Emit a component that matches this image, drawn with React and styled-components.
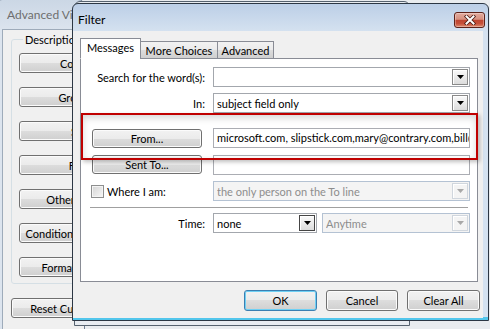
import React from 'react';
import styled, { createGlobalStyle } from 'styled-components';

const GlobalStyle = createGlobalStyle`
    html, body {
        margin: 0;
        padding: 0;
    }
    body {
        width: 490px;
        height: 329px;
        overflow: hidden;
        background: #e9ecef;
        font-family: Lato, "Noto Sans", "DejaVu Sans", sans-serif;
        font-size: 11px;
        color: #000;
    }
`;

const Desktop = styled.div`
    position: relative;
    width: 490px;
    height: 329px;
    overflow: hidden;
`;

//#region Window chrome

const Window = styled.div`
    position: absolute;
    box-sizing: border-box;
    display: flex;
    flex-direction: column;
    border: 1px solid #56626f;
    border-radius: 7px 7px 0 0;
`;

// only the strip left of the Filter dialog is ever visible
const BackWindow = styled(Window)`
    left: -5px;
    top: -1px;
    width: 90px;
    height: 345px;
    overflow: hidden;
    border-color: #6d7d90;
    background: linear-gradient(#cbd7e5, #dce4ee 30px, #dce4ee);
`;

const GhostWindow = styled(Window)`
    left: 74px;
    top: 1px;
    width: 336px;
    height: 325px;
    border-radius: 6px 6px 0 0;
    background: #e8ecf1;
    z-index: 1;
`;

const FilterWindow = styled(Window)`
    left: 72px;
    top: 3px;
    width: 417px;
    height: 318px;
    border-color: #2c3744;
    border-radius: 6px 6px 0 0;
    background: linear-gradient(#bccfe7, #d5e2f0 28px, #d4e2f1 calc(100% - 3px), #52c6ec calc(100% - 3px));
    z-index: 2;
`;

const TitleBar = styled.div`
    display: flex;
    align-items: flex-start;
    justify-content: space-between;
    height: ${props => props.$height}px;
    box-sizing: border-box;
    padding: ${props => props.$top}px 3px 0 ${props => props.$left}px;
`;

const TitleText = styled.span`
    line-height: 15px;
    font-size: 12px;
    color: ${props => props.$inactive ? '#6e6e6e' : '#000'};
    white-space: nowrap;
`;

const CloseButton = styled.div`
    box-sizing: border-box;
    width: 31px;
    height: 16px;
    display: flex;
    align-items: center;
    justify-content: center;
    border: 1px solid #5e2219;
    border-radius: 3px;
    background: linear-gradient(#e3ab9e 0%, #d6907f 45%, #bf4530 52%, #c65039 75%, #dc8a6e 100%);
    box-shadow: inset 0 0 0 1px rgba(255, 255, 255, 0.3);
`;

//#endregion

//#region Back window contents

const BackClient = styled.div`
    flex: 1;
    display: flex;
    flex-direction: column;
    align-items: flex-start;
    margin: 0 0 0 6px;
    padding-left: 8px;
    border: 1px solid #9eabba;
    border-width: 1px 0 0 1px;
    background: #f0f0f0;
`;

const GroupBox = styled.div`
    display: flex;
    flex-direction: column;
    align-items: flex-start;
    gap: 14px;
    width: 160px;
    margin-top: 9px;
    padding: 0 0 6px 7px;
    border: 1px solid #d5dfe5;
    border-radius: 3px;
`;

const GroupLegend = styled.span`
    line-height: 15px;
    margin: -8px 0 -8px 4px;
    padding: 0 2px;
    background: #f0f0f0;
`;

//#endregion

//#region Controls

const Button = styled.button`
    box-sizing: border-box;
    width: ${props => props.$width}px;
    height: ${props => props.$height || 20}px;
    flex: 0 0 auto;
    margin: 0;
    padding: 0 2px;
    font: inherit;
    line-height: 15px;
    color: #000;
    white-space: nowrap;
    overflow: hidden;
    border: 1px solid ${props => props.$default ? '#3c7fb1' : '#707070'};
    border-radius: 3px;
    background: linear-gradient(#f2f2f2 0%, #ebebeb 50%, #dddddd 50%, #cfcfcf 100%);
    box-shadow: inset 0 0 0 1px ${props => props.$default ? '#6fd0f4' : '#fbfbfb'};
`;

const Panel = styled.div`
    position: relative;
    box-sizing: border-box;
    height: 224px;
    display: flex;
    flex-direction: column;
    padding: 8px 7px 0 10px;
    border: 1px solid #898c95;
    background: #fff;
`;

const TabRow = styled.div`
    position: relative;
    z-index: 1;
    display: flex;
    align-items: flex-end;
    height: 21px;
    margin-bottom: -1px;
`;

const Tab = styled.div`
    box-sizing: border-box;
    width: ${props => props.$width}px;
    height: ${props => props.$active ? 21 : 18}px;
    margin-left: ${props => props.$first ? 0 : -1}px;
    display: flex;
    align-items: center;
    justify-content: center;
    padding-bottom: ${props => props.$active ? 2 : 0}px;
    border: 1px solid #898c95;
    border-bottom-color: ${props => props.$active ? '#fff' : '#898c95'};
    background: ${props => props.$active ? '#fff' : 'linear-gradient(#f2f2f2, #ebebeb 50%, #dddddd 50%, #cfcfcf)'};
    white-space: nowrap;
`;

const Row = styled.div`
    display: flex;
    align-items: center;
    height: 20px;
    margin-top: ${props => props.$gap || 0}px;
`;

const LabelCell = styled.div`
    flex: 0 0 114px;
    display: flex;
    align-items: center;
    align-self: ${props => props.$top ? 'flex-start' : 'auto'};
    justify-content: ${props => props.$left ? 'flex-start' : 'flex-end'};
    margin-right: 8px;
    white-space: nowrap;
`;

const Controls = styled.div`
    flex: 1;
    display: flex;
    gap: 5px;
    min-width: 0;
`;

const Combo = styled.div`
    box-sizing: border-box;
    flex: ${props => props.$width ? `0 0 ${props.$width}px` : '1'};
    min-width: 0;
    height: 20px;
    display: flex;
    align-items: center;
    padding: 0 1px 0 3px;
    border: 1px solid ${props => props.$disabled ? '#b4c2d3' : '#a3a7ad'};
    background: ${props => props.$disabled ? '#f4f4f4' : '#fff'};
    color: ${props => props.$disabled ? '#8d8d8d' : '#000'};
`;

const ComboText = styled.span`
    flex: 1;
    overflow: hidden;
    white-space: nowrap;
`;

const DropButton = styled.span`
    box-sizing: border-box;
    width: 16px;
    height: 16px;
    display: flex;
    align-items: center;
    justify-content: center;
    border: 1px solid ${props => props.$disabled ? '#d0d6dd' : props.$dark ? '#454545' : '#8a8a8a'};
    background: ${props => props.$disabled ? '#f4f4f4' : 'linear-gradient(#fafafa, #dcdcdc)'};
    box-shadow: inset 1px 1px 0 #fff;
`;

const TextField = styled.div`
    box-sizing: border-box;
    flex: 1;
    min-width: 0;
    height: 20px;
    padding: 0 1px 0 3px;
    line-height: 18px;
    border: 1px solid #abadb3;
    background: #fff;
    overflow: hidden;
    white-space: nowrap;
`;

const CheckBox = styled.span`
    box-sizing: border-box;
    width: 13px;
    height: 13px;
    margin-right: 3px;
    border: 1px solid #8e8f8f;
    background: linear-gradient(135deg, #d4d4d4, #f7f7f7);
    box-shadow: inset 0 0 0 1px #f4f4f4;
`;

const Separator = styled.div`
    height: 1px;
    margin: 6px 2px 5px -1px;
    background: #a0a0a0;
`;

const Highlight = styled.div`
    position: absolute;
    left: 0;
    top: 54px;
    width: 397px;
    height: 47px;
    box-sizing: border-box;
    border: 2px solid #c00000;
    box-shadow: 2px 2px 4px rgba(0, 0, 0, 0.25), inset 0 3px 7px rgba(0, 0, 0, 0.16);
    pointer-events: none;
`;

const FilterClient = styled.div`
    flex: 1;
    display: flex;
    flex-direction: column;
    margin: 0 5px 2px 0;
    padding: 7px 5px 0 7px;
    background: #f0f0f0;
`;

const ButtonRow = styled.div`
    display: flex;
    justify-content: flex-end;
    gap: 9px;
    margin: 8px -2px 0 0;
`;

//#endregion

const Arrow = ({ disabled }) => (
    <svg width="7" height="4" viewBox="0 0 7 4">
        <path d="M0 0h7L3.5 4z" fill={disabled ? '#a8a8a8' : '#000'} />
    </svg>
);

const DropDown = ({ text, width, disabled, dark }) => (
    <Combo $width={width} $disabled={disabled}>
        <ComboText>{text}</ComboText>
        <DropButton $disabled={disabled} $dark={dark}>
            <Arrow disabled={disabled} />
        </DropButton>
    </Combo>
);

const backButtons = [
    'Columns...',
    'Group By...',
    'Sort...',
    'Filter...',
    'Other Settings...',
    'Conditional Formatting...',
    'Format Columns...',
];

const App = () => {
    return (
        <Desktop>
            <GlobalStyle />

            <BackWindow>
                <TitleBar $height={29} $top={7} $left={11}>
                    <TitleText $inactive>Advanced View Settings: Messages</TitleText>
                </TitleBar>
                <BackClient>
                    <GroupBox>
                        <GroupLegend>Description</GroupLegend>
                        {backButtons.map(label => (
                            <Button key={label} $width={132}>{label}</Button>
                        ))}
                    </GroupBox>
                    <Button $width={132} style={{ marginTop: 14 }}>Reset Current View</Button>
                </BackClient>
            </BackWindow>

            <GhostWindow />

            <FilterWindow>
                <TitleBar $height={27} $top={8} $left={5}>
                    <TitleText>Filter</TitleText>
                    <CloseButton>
                        <svg width="12" height="10" viewBox="0 0 12 10">
                            <path d="M2.5 1.5l7 7M9.5 1.5l-7 7" stroke="#4a1911" strokeWidth="3.6" strokeLinecap="square" />
                            <path d="M2.5 1.5l7 7M9.5 1.5l-7 7" stroke="#fff" strokeWidth="2" strokeLinecap="square" />
                        </svg>
                    </CloseButton>
                </TitleBar>

                <FilterClient>
                    <TabRow>
                        <Tab $active $first $width={61}>Messages</Tab>
                        <Tab $width={78}>More Choices</Tab>
                        <Tab $width={57}>Advanced</Tab>
                    </TabRow>

                    <Panel>
                        <Row>
                            <LabelCell>Search for the word(s):</LabelCell>
                            <Controls>
                                <DropDown text="" />
                            </Controls>
                        </Row>
                        <Row $gap={6}>
                            <LabelCell>In:</LabelCell>
                            <Controls>
                                <DropDown text="subject field only" />
                            </Controls>
                        </Row>
                        <Row $gap={15}>
                            <LabelCell $left>
                                <Button $width={110} $height={19} style={{ marginLeft: 1 }}>From...</Button>
                            </LabelCell>
                            <Controls>
                                <TextField>microsoft.com, slipstick.com,mary@contrary.com,bill@contrary.com</TextField>
                            </Controls>
                        </Row>
                        <Row $gap={7}>
                            <LabelCell $left $top>
                                <Button $width={110} $height={19} style={{ marginLeft: 1 }}>Sent To...</Button>
                            </LabelCell>
                            <Controls>
                                <TextField />
                            </Controls>
                        </Row>
                        <Row $gap={6}>
                            <LabelCell $left>
                                <CheckBox />
                                Where I am:
                            </LabelCell>
                            <Controls>
                                <DropDown text="the only person on the To line" disabled />
                            </Controls>
                        </Row>
                        <Separator />
                        <Row>
                            <LabelCell>Time:</LabelCell>
                            <Controls>
                                <DropDown text="none" width={104} dark />
                                <DropDown text="Anytime" disabled />
                            </Controls>
                        </Row>

                        <Highlight />
                    </Panel>

                    <ButtonRow>
                        <Button $width={73} $height={21} $default>OK</Button>
                        <Button $width={72} $height={21}>Cancel</Button>
                        <Button $width={73} $height={21}>Clear All</Button>
                    </ButtonRow>
                </FilterClient>
            </FilterWindow>
        </Desktop>
    );
};

export default App;
